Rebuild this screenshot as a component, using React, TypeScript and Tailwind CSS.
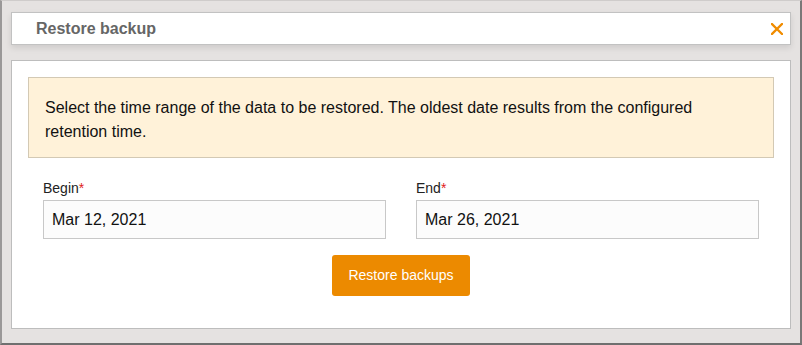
import { useState } from 'react';

export default function App() {
  const [begin, setBegin] = useState('Mar 12, 2021');
  const [end, setEnd] = useState('Mar 26, 2021');

  return (
    <div className="h-[345px] w-[802px] overflow-hidden font-['Liberation_Sans',Arial,sans-serif]">
      <div className="flex h-[345px] w-[802px] flex-col border-b-2 border-l-2 border-r-2 border-t border-b-[#6f6f6f] border-l-[#9a9898] border-r-[#7a7878] border-t-[#cfcccb] bg-[#e5e2e1] pl-[9px] pr-[9px] pt-[11px]">
        <div className="flex h-[33px] items-center justify-between border border-[#c2c2c2] bg-white pl-[24px] pr-[5px] shadow-[0_3px_6px_rgba(0,0,0,0.10)]">
          <h2 className="text-[16px] font-bold text-[#666666]">Restore backup</h2>
          <button type="button" aria-label="Close" className="flex h-4 w-4 items-center justify-center">
            <svg width="12" height="12" viewBox="0 0 12 12">
              <path d="M1 1L11 11M11 1L1 11" stroke="#f08c00" strokeWidth="2.3" strokeLinecap="square" />
            </svg>
          </button>
        </div>

        <div className="mt-[15px] flex h-[269px] flex-col border border-[#bdbdbd] bg-white px-[16px] pt-[16px]">
          <div className="border border-[#d3c9b4] bg-[#fff2d9] pb-[13px] pl-[16px] pr-[16px] pt-[18px] text-[16px] leading-[24px] text-[#111]">
            Select the time range of the data to be restored. The oldest date results from the configured retention time.
          </div>

          <div className="mt-[22px] grid grid-cols-2 gap-[30px] px-[15px]">
            <label className="flex flex-col">
              <span className="text-[14px] leading-[16px] text-[#222]">
                Begin<span className="text-[#e02020]">*</span>
              </span>
              <input
                value={begin}
                onChange={(e) => setBegin(e.target.value)}
                className="mt-[4px] h-[39px] border border-[#c8c8c8] bg-[#fcfcfc] px-[8px] text-[16px] text-[#111] outline-none"
              />
            </label>
            <label className="flex flex-col">
              <span className="text-[14px] leading-[16px] text-[#222]">
                End<span className="text-[#e02020]">*</span>
              </span>
              <input
                value={end}
                onChange={(e) => setEnd(e.target.value)}
                className="mt-[4px] h-[39px] border border-[#c8c8c8] bg-[#fcfcfc] px-[8px] text-[16px] text-[#111] outline-none"
              />
            </label>
          </div>

          <div className="mt-[16px] flex justify-center">
            <button
              type="button"
              className="h-[41px] w-[138px] rounded-[3px] bg-[#ec8a00] text-[14px] text-white"
            >
              Restore backups
            </button>
          </div>
        </div>
      </div>
    </div>
  );
}
